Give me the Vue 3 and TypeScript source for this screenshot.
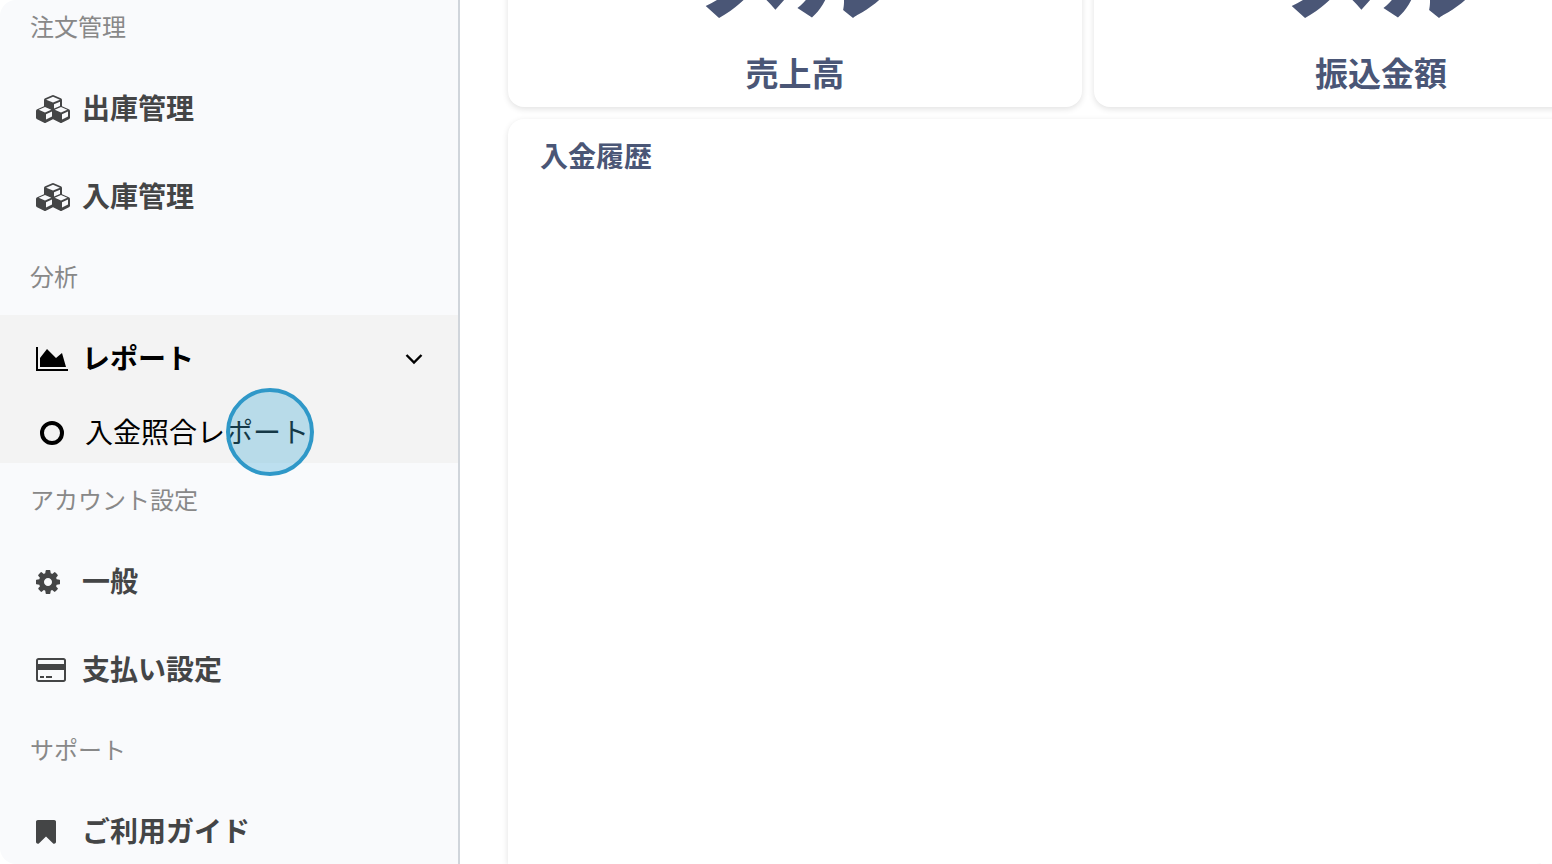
<script setup lang="ts">
interface Icon {
  viewBox: string
  width: number
  height: number
  path: string
}

interface MenuItem {
  label: string
  icon: string
  open?: boolean
  children?: string[]
}

interface Section {
  title: string
  items: MenuItem[]
}

const icons: Record<string, Icon> = {
  cubes: {
    viewBox: '0 64 2176 1792',
    width: 34,
    height: 28,
    path: 'M640 1632l384-192v-314l-384 164v342zM576 1178l404-173-404-173-404 173zM1664 1632l384-192v-314l-384 164v342zM1600 1178l404-173-404-173-404 173zM1152 929l384-165v-266l-384 164v267zM1088 549l441-189-441-189-441 189zM2176 1088v416q0 36-19 67t-52 47l-448 224q-25 14-57 14t-57-14l-448-224q-4-2-7-4-2 2-7 4l-448 224q-25 14-57 14t-57-14l-448-224q-33-16-52-47t-19-67v-416q0-38 21.5-70t56.5-48l434-186v-400q0-38 21.5-70t56.5-48l448-192q23-10 50-10t50 10l448 192q35 16 56.5 48t21.5 70v400l434 186q36 16 57 48t21 70z',
  },
  chart: {
    viewBox: '0 128 2048 1536',
    width: 32,
    height: 24,
    path: 'M2048 1536v128h-2048v-1536h128v1408h1920zM1664 512l256 896h-1664v-576l448-576 576 576z',
  },
  cog: {
    viewBox: '128 128 1536 1536',
    width: 24,
    height: 24,
    path: 'M1152 896q0-106-75-181t-181-75-181 75-75 181 75 181 181 75 181-75 75-181zm512-109v222q0 12-8 23t-20 13l-185 28q-19 54-39 91 35 50 107 138 10 12 10 25t-9 23q-27 37-99 108t-94 71q-12 0-26-9l-138-108q-44 23-91 38-16 136-29 186-7 28-36 28h-222q-14 0-24.5-8.5t-11.5-21.5l-28-184q-49-16-90-37l-141 107q-10 9-25 9-14 0-25-11-126-114-165-168-7-10-7-23 0-12 8-23 15-21 51-66.5t54-70.5q-27-50-41-99l-183-27q-13-2-21-12.5t-8-23.5v-222q0-12 8-23t19-13l186-28q14-46 39-92-40-57-107-138-10-12-10-24 0-10 9-23 26-36 98.5-107.5t94.5-71.5q13 0 26 10l138 107q44-23 91-38 16-136 29-186 7-28 36-28h222q14 0 24.5 8.5t11.5 21.5l28 184q49 16 90 37l142-107q9-9 24-9 13 0 25 10 129 119 165 170 7 8 7 22 0 12-8 23-15 21-51 66.5t-54 70.5q26 50 41 98l183 28q13 2 21 12.5t8 23.5z',
  },
  card: {
    viewBox: '0 128 1920 1536',
    width: 30,
    height: 24,
    path: 'M1760 128q66 0 113 47t47 113v1216q0 66-47 113t-113 47h-1600q-66 0-113-47t-47-113v-1216q0-66 47-113t113-47h1600zM160 256q-13 0-22.5 9.5t-9.5 22.5v224h1664v-224q0-13-9.5-22.5t-22.5-9.5h-1600zM1760 1536q13 0 22.5-9.5t9.5-22.5v-608h-1664v608q0 13 9.5 22.5t22.5 9.5h1600zM256 1408v-128h256v128h-256zM640 1408v-128h384v128h-384z',
  },
  bookmark: {
    viewBox: '256 128 1280 1536',
    width: 20,
    height: 24,
    path: 'M1420 128q23 0 44 9 33 13 52.5 41t19.5 62v1289q0 34-19.5 62t-52.5 41q-19 8-44 8-48 0-83-32l-441-424-441 424q-36 33-83 33-23 0-44-9-33-13-52.5-41t-19.5-62v-1289q0-34 19.5-62t52.5-41q21-9 44-9h1048z',
  },
}

const sections: Section[] = [
  {
    title: '注文管理',
    items: [
      { label: '出庫管理', icon: 'cubes' },
      { label: '入庫管理', icon: 'cubes' },
    ],
  },
  {
    title: '分析',
    items: [{ label: 'レポート', icon: 'chart', open: true, children: ['入金照合レポート'] }],
  },
  {
    title: 'アカウント設定',
    items: [
      { label: '一般', icon: 'cog' },
      { label: '支払い設定', icon: 'card' },
    ],
  },
  { title: 'サポート', items: [{ label: 'ご利用ガイド', icon: 'bookmark' }] },
]

const stats = [
  { value: 'メル', label: '売上高' },
  { value: 'メル', label: '振込金額' },
]
</script>

<template>
  <div class="app">
    <nav class="sidebar">
      <section v-for="section in sections" :key="section.title">
        <h2 class="section-title">{{ section.title }}</h2>
        <div v-for="item in section.items" :key="item.label" :class="{ open: item.open }">
          <component
            :is="item.children ? 'button' : 'a'"
            class="item"
            :href="item.children ? undefined : '#'"
            :type="item.children ? 'button' : undefined"
            :aria-expanded="item.children ? 'true' : undefined"
          >
            <span class="icon">
              <svg
                :viewBox="icons[item.icon].viewBox"
                :width="icons[item.icon].width"
                :height="icons[item.icon].height"
                fill="currentColor"
                aria-hidden="true"
              >
                <path :d="icons[item.icon].path" />
              </svg>
            </span>
            <span class="label">{{ item.label }}</span>
            <svg v-if="item.children" class="chevron" width="18" height="12" viewBox="0 0 18 12" aria-hidden="true">
              <path d="M1.5 2l7.5 7.5 7.5-7.5" fill="none" stroke="currentColor" stroke-width="2.4" />
            </svg>
          </component>
          <a v-for="child in item.children" :key="child" class="child" href="#">
            <span class="ring"></span>
            <span class="label">{{ child }}</span>
            <span class="pointer"></span>
          </a>
        </div>
      </section>
    </nav>

    <main class="content">
      <div class="stats">
        <article v-for="stat in stats" :key="stat.label" class="card stat">
          <strong class="value">{{ stat.value }}</strong>
          <span class="stat-label">{{ stat.label }}</span>
        </article>
      </div>
      <article class="card history">
        <h2 class="history-title">入金履歴</h2>
      </article>
    </main>
  </div>
</template>

<style>
body {
  margin: 0;
  background: #fff;
}
</style>

<style scoped>
.app {
  display: flex;
  height: 100vh;
  overflow: hidden;
  border-radius: 16px;
  font-family: 'Noto Sans CJK JP', 'Noto Sans', sans-serif;
  background: #fff;
}

.sidebar {
  box-sizing: border-box;
  flex: 0 0 460px;
  margin-top: -9px;
  border-right: 2px solid #d0d5db;
  background: #f9fafc;
}

.section-title {
  margin: 0;
  padding: 17px 30px 21px;
  font-size: 24px;
  line-height: 36px;
  font-weight: 400;
  color: #888;
}

.item {
  box-sizing: border-box;
  display: flex;
  align-items: center;
  width: 100%;
  height: 88px;
  padding: 0 35px 0 36px;
  border: 0;
  background: none;
  font-family: inherit;
  font-size: 28px;
  line-height: 40px;
  font-weight: 700;
  color: #444546;
  text-decoration: none;
}

.icon {
  display: flex;
  flex: 0 0 46px;
}

.label {
  padding-bottom: 4px;
}

.chevron {
  margin-left: auto;
}

.open {
  margin-bottom: 1px;
  background: #f3f3f3;
}

.open .item {
  color: #000;
}

.child {
  position: relative;
  display: flex;
  align-items: center;
  gap: 21px;
  height: 60px;
  padding: 0 40px;
  font-size: 28px;
  line-height: 40px;
  color: #000;
  text-decoration: none;
}

.ring {
  box-sizing: border-box;
  width: 24px;
  height: 24px;
  border: 4px solid #000;
  border-radius: 50%;
}

.pointer {
  position: absolute;
  top: -15px;
  left: 226px;
  box-sizing: border-box;
  width: 88px;
  height: 88px;
  border: 4px solid #2f98c8;
  border-radius: 50%;
  background: rgba(64, 169, 212, 0.33);
}

.content {
  display: flex;
  flex: 1;
  flex-direction: column;
  gap: 12px;
  min-width: 0;
  margin-right: -116px;
  padding-left: 48px;
}

.stats {
  display: grid;
  grid-template-columns: 1fr 1fr;
  gap: 12px;
}

.card {
  border-radius: 16px;
  background: #fff;
  box-shadow: 0 2px 6px rgba(0, 0, 0, 0.12);
  color: #4a5676;
}

.stat {
  display: flex;
  flex-direction: column;
  align-items: center;
  margin-top: -101px;
  padding-bottom: 10px;
}

.value {
  padding-bottom: 8px;
  font-size: 98px;
  line-height: 140px;
  font-weight: 900;
}

.stat-label {
  font-size: 33px;
  line-height: 50px;
  font-weight: 700;
}

.history {
  flex: 1;
  padding: 16px 32px;
  border-radius: 16px 16px 0 0;
}

.history-title {
  margin: 0;
  font-size: 28px;
  line-height: 40px;
  font-weight: 700;
}
</style>
